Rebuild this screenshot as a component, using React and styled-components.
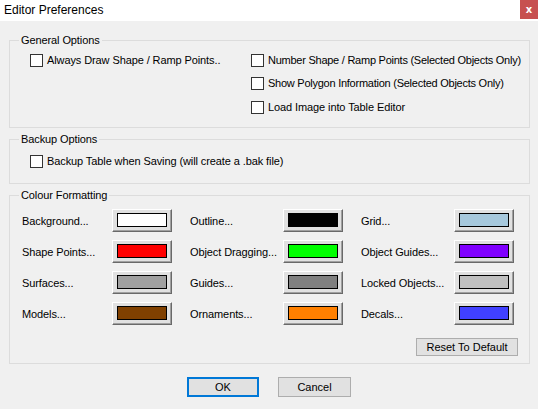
import React, { useState } from 'react'
import styled, { createGlobalStyle } from 'styled-components'

const GlobalStyle = createGlobalStyle`
  html, body {
    margin: 0;
    padding: 0;
    background: #f0f0f0;
  }
  * {
    box-sizing: border-box;
  }
`

const Window = styled.div`
  width: 538px;
  height: 409px;
  background: #f0f0f0;
  font-family: "Liberation Sans", Arial, sans-serif;
  font-size: 11px;
  letter-spacing: -0.1px;
  color: #000;
  display: flex;
  flex-direction: column;
  overflow: hidden;
`

const TitleBar = styled.div`
  height: 21px;
  background: #fff;
  display: flex;
  align-items: flex-start;
  flex-shrink: 0;
`

const TitleText = styled.div`
  font-size: 12px;
  letter-spacing: 0;
  line-height: 20px;
  padding-left: 4px;
  flex: 1;
`

const CloseButton = styled.button`
  width: 18px;
  height: 19px;
  border: none;
  padding: 0;
  background: #c75050;
  color: #fff;
  font-family: "DejaVu Sans", sans-serif;
  font-weight: 700;
  font-size: 10px;
  line-height: 17px;
  cursor: pointer;
`

const Content = styled.div`
  padding: 13px 8px 0 9px;
  display: flex;
  flex-direction: column;
  gap: 5px;
`

const Group = styled.fieldset`
  margin: 0;
  border: 1px solid #dcdcdc;
  padding: 0;
  min-width: 0;
`

const Legend = styled.legend`
  margin-left: 9px;
  padding: 0 2px;
  line-height: 13px;
  font-size: 11px;
`

const GroupBody = styled.div`
  padding: ${p => p.$pad};
`

const OptionsGrid = styled.div`
  display: grid;
  grid-template-columns: 221px 1fr;
  grid-template-rows: 23px 24px 13px;
`

const CheckRow = styled.label`
  display: flex;
  align-items: flex-start;
  gap: 4px;
  grid-column: ${p => p.$col || 'auto'};
  grid-row: ${p => p.$row || 'auto'};
  line-height: 13px;
  letter-spacing: ${p => (p.$tight ? '-0.25px' : '-0.1px')};
  white-space: nowrap;
  cursor: default;
`

const Box = styled.span`
  width: 13px;
  height: 13px;
  border: 1px solid #333;
  background: #fff;
  flex-shrink: 0;
  display: flex;
  align-items: center;
  justify-content: center;
`

const ColourGrid = styled.div`
  display: grid;
  grid-template-columns: 150px 153px 153px;
  column-gap: 18px;
  row-gap: 8px;
`

const ColourItem = styled.div`
  display: flex;
  align-items: center;
  height: 23px;
`

const ColourLabel = styled.span`
  flex: 1;
  white-space: nowrap;
`

const ColourButton = styled.button`
  width: 60px;
  height: 23px;
  padding: 0;
  background: #e1e1e1;
  border: 1px solid;
  border-color: #fff #696969 #696969 #fff;
  box-shadow: inset -1px -1px 0 #a0a0a0;
  display: flex;
  align-items: center;
  justify-content: center;
  flex-shrink: 0;
`

const Swatch = styled.span`
  width: 50px;
  height: 14px;
  margin-top: -1px;
  border: 1px solid #000;
  background: ${p => p.$colour};
`

const ResetRow = styled.div`
  display: flex;
  justify-content: flex-end;
  margin-top: 13px;
`

const FlatButton = styled.button`
  height: ${p => p.$h || '20px'};
  width: ${p => p.$w};
  background: #e1e1e1;
  border: ${p => (p.$primary ? '2px solid #0078d7' : '1px solid #adadad')};
  font-family: "Liberation Sans", Arial, sans-serif;
  font-size: 11px;
  color: #000;
  padding: 0;
`

const DialogButtons = styled.div`
  display: flex;
  justify-content: center;
  gap: 19px;
  margin-top: 8px;
  padding-right: 1px;
`

const colours = [
  ['Background...', '#ffffff'],
  ['Outline...', '#000000'],
  ['Grid...', '#a6c8dc'],
  ['Shape Points...', '#ff0000'],
  ['Object Dragging...', '#00ff00'],
  ['Object Guides...', '#8000ff'],
  ['Surfaces...', '#a0a0a0'],
  ['Guides...', '#808080'],
  ['Locked Objects...', '#c0c0c0'],
  ['Models...', '#804000'],
  ['Ornaments...', '#ff8000'],
  ['Decals...', '#4040ff'],
]

const Check = ({ text, col, row, tight }) => {
  const [on, setOn] = useState(false)
  return (
    <CheckRow $col={col} $row={row} $tight={tight} onClick={() => setOn(!on)}>
      <Box>
        {on && (
          <svg width="9" height="9" viewBox="0 0 9 9">
            <path d="M1 4.5 L3.5 7 L8 1.5" stroke="#000" strokeWidth="1.5" fill="none" />
          </svg>
        )}
      </Box>
      {text}
    </CheckRow>
  )
}

const App = () => {
  return (
    <Window>
      <GlobalStyle />
      <TitleBar>
        <TitleText>Editor Preferences</TitleText>
        <CloseButton>x</CloseButton>
      </TitleBar>

      <Content>
        <Group>
          <Legend>General Options</Legend>
          <GroupBody $pad="7px 6px 13px 20px">
            <OptionsGrid>
              <Check text="Always Draw Shape / Ramp Points.." col={1} row={1} />
              <Check text="Number Shape / Ramp Points (Selected Objects Only)" col={2} row={1} tight />
              <Check text="Show Polygon Information (Selected Objects Only)" col={2} row={2} tight />
              <Check text="Load Image into Table Editor" col={2} row={3} />
            </OptionsGrid>
          </GroupBody>
        </Group>

        <Group>
          <Legend>Backup Options</Legend>
          <GroupBody $pad="9px 10px 15px 20px">
            <Check text="Backup Table when Saving (will create a .bak file)" />
          </GroupBody>
        </Group>

        <Group>
          <Legend>Colour Formatting</Legend>
          <GroupBody $pad="7px 11px 7px 12px">
            <ColourGrid>
              {colours.map(([name, c]) => (
                <ColourItem key={name}>
                  <ColourLabel>{name}</ColourLabel>
                  <ColourButton>
                    <Swatch $colour={c} />
                  </ColourButton>
                </ColourItem>
              ))}
            </ColourGrid>
            <ResetRow>
              <FlatButton $w="102px" $h="18px">Reset To Default</FlatButton>
            </ResetRow>
          </GroupBody>
        </Group>

        <DialogButtons>
          <FlatButton $w="72px" $primary>OK</FlatButton>
          <FlatButton $w="73px">Cancel</FlatButton>
        </DialogButtons>
      </Content>
    </Window>
  )
}

export default App
